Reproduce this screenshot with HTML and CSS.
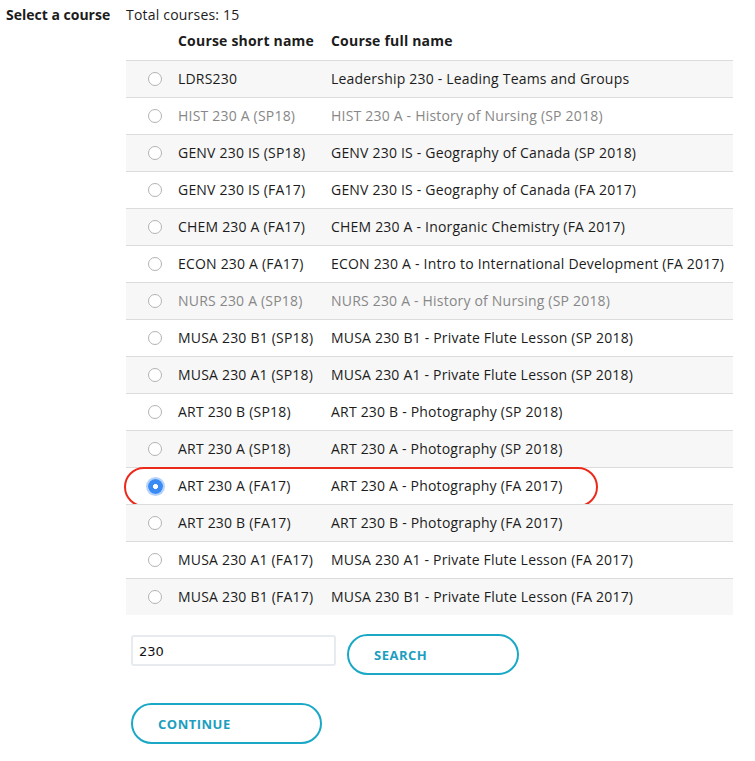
FILE: index.html
```
<!DOCTYPE html>
<html>
<head>
<meta charset="utf-8">
<link rel="stylesheet" href="styles.css">
</head>
<body>
<div class="page">
  <div class="label">Select a course</div>
  <div class="main">
    <div class="total">Total courses: 15</div>
    <div class="table">
      <div class="row head"><div></div><div>Course short name</div><div>Course full name</div></div>
      <div class="row"><div class="rc"><span class="radio"></span></div><div>LDRS230</div><div>Leadership 230 - Leading Teams and Groups</div></div>
      <div class="row dim"><div class="rc"><span class="radio"></span></div><div>HIST 230 A (SP18)</div><div>HIST 230 A - History of Nursing (SP 2018)</div></div>
      <div class="row"><div class="rc"><span class="radio"></span></div><div>GENV 230 IS (SP18)</div><div>GENV 230 IS - Geography of Canada (SP 2018)</div></div>
      <div class="row"><div class="rc"><span class="radio"></span></div><div>GENV 230 IS (FA17)</div><div>GENV 230 IS - Geography of Canada (FA 2017)</div></div>
      <div class="row"><div class="rc"><span class="radio"></span></div><div>CHEM 230 A (FA17)</div><div>CHEM 230 A - Inorganic Chemistry (FA 2017)</div></div>
      <div class="row"><div class="rc"><span class="radio"></span></div><div>ECON 230 A (FA17)</div><div>ECON 230 A - Intro to International Development (FA 2017)</div></div>
      <div class="row dim"><div class="rc"><span class="radio"></span></div><div>NURS 230 A (SP18)</div><div>NURS 230 A - History of Nursing (SP 2018)</div></div>
      <div class="row"><div class="rc"><span class="radio"></span></div><div>MUSA 230 B1 (SP18)</div><div>MUSA 230 B1 - Private Flute Lesson (SP 2018)</div></div>
      <div class="row"><div class="rc"><span class="radio"></span></div><div>MUSA 230 A1 (SP18)</div><div>MUSA 230 A1 - Private Flute Lesson (SP 2018)</div></div>
      <div class="row"><div class="rc"><span class="radio"></span></div><div>ART 230 B (SP18)</div><div>ART 230 B - Photography (SP 2018)</div></div>
      <div class="row"><div class="rc"><span class="radio"></span></div><div>ART 230 A (SP18)</div><div>ART 230 A - Photography (SP 2018)</div></div>
      <div class="row selected"><div class="rc"><span class="radio on"></span></div><div>ART 230 A (FA17)</div><div>ART 230 A - Photography (FA 2017)</div></div>
      <div class="row"><div class="rc"><span class="radio"></span></div><div>ART 230 B (FA17)</div><div>ART 230 B - Photography (FA 2017)</div></div>
      <div class="row"><div class="rc"><span class="radio"></span></div><div>MUSA 230 A1 (FA17)</div><div>MUSA 230 A1 - Private Flute Lesson (FA 2017)</div></div>
      <div class="row"><div class="rc"><span class="radio"></span></div><div>MUSA 230 B1 (FA17)</div><div>MUSA 230 B1 - Private Flute Lesson (FA 2017)</div></div>
    </div>
    <div class="search">
      <div class="input">230</div>
      <div class="btn search-btn">SEARCH</div>
    </div>
    <div class="btn continue-btn">CONTINUE</div>
  </div>
</div>
</body>
</html>
```
FILE: styles.css
```
html, body {
  margin: 0;
  padding: 0;
  background: #fff;
}
body {
  font-family: "Open Sans", "DejaVu Sans", sans-serif;
  font-size: 14px;
  line-height: 20px;
  color: #1c1c1c;
}
.page {
  display: flex;
  padding-top: 5px;
}
.label {
  width: 120px;
  padding-left: 6px;
  font-weight: 700;
}
.main {
  width: 607px;
  display: flex;
  flex-direction: column;
  letter-spacing: 0.2px;
}
.table {
  display: flex;
  flex-direction: column;
  margin-top: 1px;
}
.row {
  display: grid;
  grid-template-columns: 52px 153px 1fr;
  height: 37px;
  box-sizing: border-box;
  border-top: 1px solid #dcdcdc;
  align-items: center;
  white-space: nowrap;
  position: relative;
}
.row.head {
  border-top: none;
  height: 34px;
  align-items: start;
  padding-top: 5px;
  font-weight: 700;
}
.table .row:nth-child(even) {
  background: #f7f7f7;
}
.row.dim {
  color: #878787;
}
.rc {
  display: flex;
  justify-content: flex-end;
  padding-right: 16px;
}
.radio {
  width: 14px;
  height: 14px;
  box-sizing: border-box;
  border: 1px solid #b3b3b3;
  border-radius: 50%;
  background: #fff;
  display: block;
}
.radio.on {
  width: 15px;
  height: 15px;
  border: none;
  background: radial-gradient(circle, #fff 0 2.2px, #3a8cf4 2.8px 100%);
  box-shadow: 0 0 0 2px #b7d3fb;
  margin-right: -1px;
}
.row.selected::after {
  content: "";
  position: absolute;
  top: -1px;
  left: -2px;
  width: 474px;
  height: 40px;
  box-sizing: border-box;
  border: 2.5px solid #ec2a1c;
  border-radius: 20px;
}
.search {
  display: flex;
  align-items: flex-start;
  margin-top: 20px;
  padding-left: 5px;
  gap: 11px;
}
.input {
  width: 205px;
  height: 31px;
  box-sizing: border-box;
  border: 2px solid #e7eaee;
  border-radius: 3px;
  padding: 5px 0 0 6px;
  color: #111;
  font-family: "DejaVu Sans", "Open Sans", sans-serif;
  font-size: 13px;
  letter-spacing: 0;
}
.btn {
  height: 41px;
  box-sizing: border-box;
  border: 2px solid #1ba8c6;
  border-radius: 21px;
  color: #1d9ebf;
  font-weight: 700;
  font-size: 13px;
  letter-spacing: 0.5px;
  display: flex;
  align-items: center;
  padding-left: 25px;
}
.search-btn {
  width: 172px;
  margin-top: -1px;
}
.continue-btn {
  width: 191px;
  margin-top: 28px;
  margin-left: 5px;
}
```
